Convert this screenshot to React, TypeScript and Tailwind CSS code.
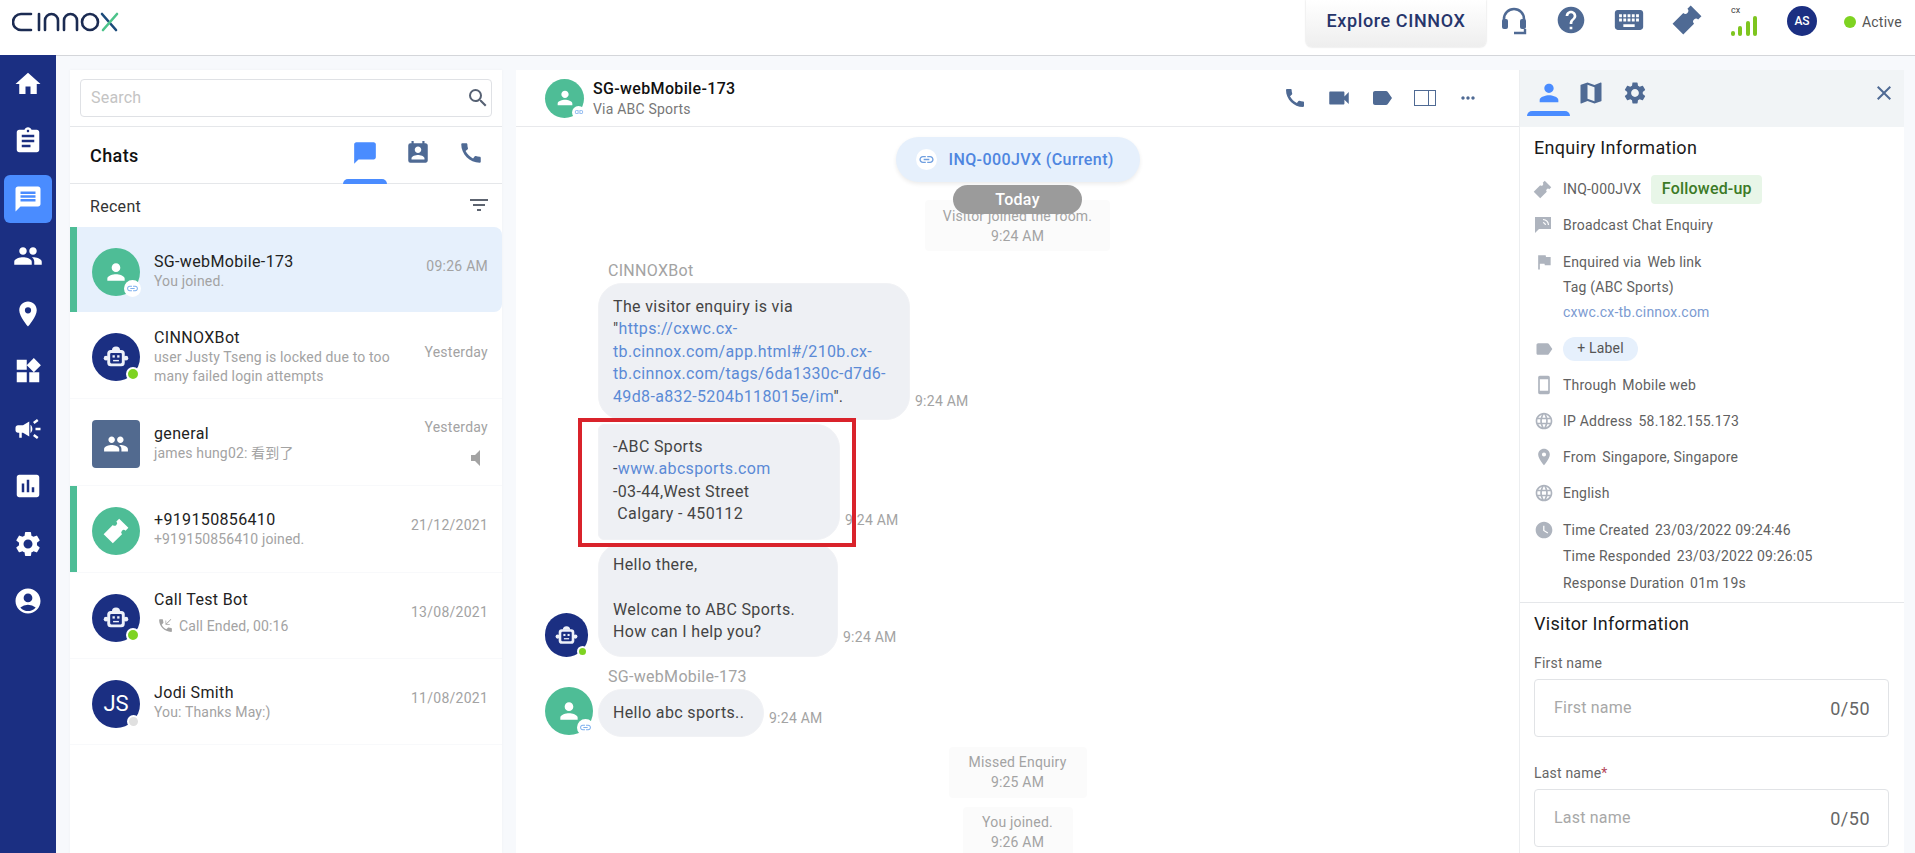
import type { ReactNode } from "react";
import {
  MdHome,
  MdAssignment,
  MdMessage,
  MdChatBubble,
  MdPeople,
  MdPlace,
  MdWidgets,
  MdCampaign,
  MdAssessment,
  MdSettings,
  MdAccountCircle,
  MdSearch,
  MdPermContactCalendar,
  MdCall,
  MdFilterList,
  MdPerson,
  MdLink,
  MdVolumeMute,
  MdPhoneCallback,
  MdVideocam,
  MdLabel,
  MdMoreHoriz,
  MdMap,
  MdClose,
  MdFlag,
  MdSmartphone,
  MdLanguage,
  MdWatchLater,
  MdHelp,
  MdKeyboard,
} from "react-icons/md";

const navItems = [
  MdHome,
  MdAssignment,
  MdMessage,
  MdPeople,
  MdPlace,
  MdWidgets,
  MdCampaign,
  MdAssessment,
  MdSettings,
  MdAccountCircle,
];

function Logo() {
  return (
    <svg width="108" height="20" viewBox="0 0 108 20" fill="none" strokeWidth="2.6" strokeLinecap="round">
      <g stroke="#1b2b52">
        <path d="M19 2H9a8 8 0 0 0 0 16h10" />
        <path d="M27 2v16" />
        <path d="M33 18V8.5a6.5 6.5 0 0 1 13 0V18" />
        <path d="M52 18V8.5a6.5 6.5 0 0 1 13 0V18" />
        <circle cx="78" cy="10" r="8" />
      </g>
      <path d="M90 2l14 16" stroke="#1b4a7a" />
      <path d="M105 2L91 18" stroke="#4cc38a" />
    </svg>
  );
}

function Headset() {
  return (
    <svg width="28" height="30" viewBox="0 0 28 30" fill="none">
      <path d="M4 20v-7a10 10 0 0 1 20 0v7" stroke="#4f6a94" strokeWidth="2.6" />
      <rect x="2" y="13" width="6" height="10" rx="2" fill="#4f6a94" />
      <rect x="20" y="13" width="6" height="10" rx="2" fill="#4f6a94" />
      <path d="M14 27h11v-4" stroke="#4f6a94" strokeWidth="2.4" />
    </svg>
  );
}

function Ticket({ size, className }: { size: number; className: string }) {
  return (
    <svg width={size} height={size} viewBox="0 0 24 24" className={`overflow-visible ${className}`} fill="currentColor">
      <g transform="rotate(-45 12 12)">
        <path d="M1 5.5h13a2.5 2.5 0 0 0 5 0h4v13h-4a2.5 2.5 0 0 0-5 0H1z" />
      </g>
    </svg>
  );
}

function Robot({ size }: { size: number }) {
  return (
    <svg width={size} height={size} viewBox="0 0 24 24">
      <path d="M8.5 6.5a3.5 3.5 0 0 1 7 0z" fill="#eef1f9" />
      <circle cx="3.5" cy="13" r="2" fill="#eef1f9" />
      <circle cx="20.5" cy="13" r="2" fill="#eef1f9" />
      <rect x="4.5" y="6" width="15" height="14" rx="3" fill="#eef1f9" />
      <rect x="7" y="8.5" width="10" height="9" rx="1" fill="#1b2f82" />
      <rect x="9" y="10.5" width="2" height="2" fill="#eef1f9" />
      <rect x="13" y="10.5" width="2" height="2" fill="#eef1f9" />
      <rect x="9.5" y="14.5" width="5" height="1.2" fill="#eef1f9" />
    </svg>
  );
}

function Signal() {
  return (
    <div className="flex h-[20px] w-[26px] items-end justify-between">
      <span className="h-[5px] w-[4px] rounded-full bg-[#7ec51f]" />
      <span className="h-[10px] w-[4px] rounded-full bg-[#7ec51f]" />
      <span className="h-[15px] w-[4px] rounded-full bg-[#7ec51f]" />
      <span className="h-[20px] w-[4px] rounded-full bg-[#7ec51f]" />
    </div>
  );
}

function TopBar() {
  return (
    <header className="flex h-[56px] shrink-0 items-start border-b border-[#d4d6da] bg-white">
      <div className="pl-[12px] pt-[12px]">
        <Logo />
      </div>
      <div className="ml-auto flex items-start">
        <div className="flex h-[47px] w-[180px] items-center justify-center rounded-b-md bg-gradient-to-b from-white to-[#eeeeee] pb-[6px] text-[18px] font-medium tracking-[0.6px] text-[#26356b] shadow-[0_0_2px_rgba(0,0,0,0.2)]">
          Explore CINNOX
        </div>
        <div className="flex w-[55px] justify-center pt-[6px]">
          <Headset />
        </div>
        <div className="flex w-[59px] justify-center pt-[4px]">
          <MdHelp size={32} className="text-[#4f6a94]" />
        </div>
        <div className="flex w-[58px] justify-center pt-[3px]">
          <MdKeyboard size={34} className="text-[#4f6a94]" />
        </div>
        <div className="flex w-[57px] justify-center pt-[6px]">
          <Ticket size={28} className="text-[#4f6a94]" />
        </div>
        <div className="ml-[16px] flex w-[26px] flex-col pt-[5px]">
          <span className="h-[11px] text-[9px] leading-[11px] text-[#444]">cx</span>
          <Signal />
        </div>
        <div className="ml-[30px] mt-[6px] flex h-[30px] w-[30px] items-center justify-center rounded-full bg-[#1b2f82] text-[12px] font-medium text-white">
          AS
        </div>
        <div className="ml-[27px] flex items-center pt-[15px] text-[14px] leading-[14px] tracking-[0.2px] text-[#555]">
          <span className="mr-[6px] h-[12px] w-[12px] rounded-full bg-[#7ed321]" />
          <span className="w-[53px]">Active</span>
        </div>
      </div>
    </header>
  );
}

function SideNav() {
  return (
    <nav className="relative -mt-[1px] w-[56px] shrink-0 bg-[#1b2f82]">
      {navItems.map((Icon, i) => (
        <div key={i} className="flex h-[57.5px] items-center justify-center">
          <div className={`flex h-[48px] w-[48px] items-center justify-center rounded-md ${i === 2 ? "bg-[#4a8cff]" : ""}`}>
            <Icon size={30} className="text-white" />
          </div>
        </div>
      ))}
    </nav>
  );
}

function LinkBadge({ small }: { small?: boolean }) {
  return (
    <span
      className={`absolute flex items-center justify-center rounded-full bg-white ${
        small ? "-bottom-[1px] -right-[1px] h-[13px] w-[13px]" : "-bottom-[1px] -right-[1px] h-[17px] w-[17px]"
      }`}
    >
      <MdLink size={small ? 10 : 13} className="text-[#7fb0ee]" />
    </span>
  );
}

function VisitorAvatar({ size = "lg" }: { size?: "lg" | "md" }) {
  return (
    <div
      className={`relative flex shrink-0 items-center justify-center rounded-full bg-[#4ebd96] ${
        size === "lg" ? "h-[48px] w-[48px]" : "h-[39px] w-[39px]"
      }`}
    >
      <MdPerson size={size === "lg" ? 26 : 22} className="text-white" />
      <LinkBadge small={size === "md"} />
    </div>
  );
}

function BotAvatar({ small }: { small?: boolean }) {
  return (
    <div
      className={`relative flex shrink-0 items-center justify-center rounded-full bg-[#1b2f82] ${
        small ? "h-[44px] w-[43px]" : "h-[48px] w-[48px]"
      }`}
    >
      <Robot size={small ? 25 : 28} />
      <span
        className={`absolute rounded-full border-2 border-white bg-[#7ed321] ${
          small ? "bottom-[0px] right-[0px] h-[11px] w-[11px]" : "bottom-[0px] right-[0px] h-[14px] w-[14px]"
        }`}
      />
    </div>
  );
}

function ChatRow({
  avatar,
  name,
  sub,
  time,
  timeTop,
  h,
  active,
  bar,
  align,
  extra,
}: {
  avatar: ReactNode;
  name: string;
  sub: ReactNode;
  time: string;
  timeTop: string;
  h: string;
  active?: boolean;
  bar?: boolean;
  align: string;
  extra?: ReactNode;
}) {
  return (
    <div
      className={`relative flex ${h} items-center pl-[22px] pr-[15px] pt-[4px] ${
        active ? "rounded-r-lg bg-[#e6f0fc]" : "border-b border-[#f8f9fb]"
      }`}
    >
      {bar && <span className="absolute bottom-0 left-0 top-0 w-[7px] bg-[#4ebd96]" />}
      {avatar}
      <div className={`ml-[14px] min-w-0 flex-1 ${align}`}>
        <div className="text-[16px] leading-[20px] tracking-[0.35px] text-[#222]">{name}</div>
        {sub}
      </div>
      <div className={`absolute right-[14px] ${timeTop} text-right text-[14px] leading-[18px] tracking-[0.25px] text-[#a3a3a3]`}>{time}</div>
      {extra}
    </div>
  );
}

function ChatList() {
  const subClass = "text-[14px] leading-[19.5px] tracking-[0.15px] text-[#a3a3a3]";
  return (
    <section className="flex w-[432px] shrink-0 flex-col bg-white shadow-[0_0_3px_rgba(0,0,0,0.04)]">
      <div className="h-[57px] border-b border-[#e5e7ea] px-[10px] pt-[9px]">
        <div className="flex h-[38px] items-center justify-between rounded border border-[#dfe1e5] pl-[10px] pr-[1px]">
          <span className="text-[16px] tracking-[0.2px] text-[#c4c4c4]">Search</span>
          <MdSearch size={24} className="text-[#566173]" />
        </div>
      </div>
      <div className="flex h-[57px] items-start border-b border-[#e5e7ea] pl-[20px]">
        <span className="pt-[18px] text-[18px] font-medium leading-[22px] tracking-[0.4px] text-[#111]">Chats</span>
        <div className="ml-auto flex">
          <div className="relative flex h-[57px] w-[44px] justify-center pt-[13px]">
            <MdChatBubble size={26} className="text-[#4a8cff]" />
            <span className="absolute bottom-0 left-0 h-[5px] w-[44px] rounded-t-md bg-[#4a8cff]" />
          </div>
          <div className="ml-[9px] flex w-[44px] justify-center pt-[13px]">
            <MdPermContactCalendar size={26} className="text-[#4f6a94]" />
          </div>
          <div className="ml-[9px] mr-[9px] flex w-[44px] justify-center pt-[13px]">
            <MdCall size={26} className="text-[#4f6a94]" />
          </div>
        </div>
      </div>
      <div className="flex h-[43px] items-center justify-between pl-[20px] pr-[11px]">
        <span className="pt-[3px] text-[16px] tracking-[0.3px] text-[#333]">Recent</span>
        <MdFilterList size={24} className="-translate-y-[1px] text-[#5d6470]" />
      </div>
      <ChatRow
        h="h-[85px]"
        active
        bar
        align=""
        avatar={<VisitorAvatar />}
        name="SG-webMobile-173"
        sub={<div className={subClass}>You joined.</div>}
        time="09:26 AM"
        timeTop="top-[30px]"
      />
      <ChatRow
        h="h-[87px]"
        align=""
        avatar={<BotAvatar />}
        name="CINNOXBot"
        sub={
          <div className={`${subClass} w-[250px]`}>
            user Justy Tseng is locked due to too many failed login attempts
          </div>
        }
        time="Yesterday"
        timeTop="top-[31px]"
      />
      <ChatRow
        h="h-[87px]"
        align=""
        avatar={
          <div className="flex h-[48px] w-[48px] shrink-0 items-center justify-center rounded bg-[#526a8f]">
            <MdPeople size={26} className="text-white" />
          </div>
        }
        name="general"
        sub={<div className={subClass}>james hung02: 看到了</div>}
        time="Yesterday"
        timeTop="top-[19px]"
        extra={<MdVolumeMute size={24} className="absolute right-[14px] top-[47px] text-[#a3a3a3]" />}
      />
      <ChatRow
        h="h-[87px]"
        bar
        align="-translate-y-[1px]"
        avatar={
          <div className="flex h-[48px] w-[48px] shrink-0 items-center justify-center rounded-full bg-[#4ebd96]">
            <Ticket size={24} className="text-white" />
          </div>
        }
        name="+919150856410"
        sub={<div className={subClass}>+919150856410 joined.</div>}
        time="21/12/2021"
        timeTop="top-[30px]"
      />
      <ChatRow
        h="h-[86px]"
        align="-translate-y-[5px]"
        avatar={<BotAvatar />}
        name="Call Test Bot"
        sub={
          <div className="mt-[6px] flex items-center text-[14px] leading-[20px] tracking-[0.15px] text-[#a3a3a3]">
            <MdPhoneCallback size={17} className="ml-[3px] mr-[5px]" />
            Call Ended, 00:16
          </div>
        }
        time="13/08/2021"
        timeTop="top-[30px]"
      />
      <ChatRow
        h="h-[86px]"
        align="-translate-y-[1px]"
        avatar={
          <div className="relative flex h-[48px] w-[48px] shrink-0 items-center justify-center rounded-full bg-[#1b2f82] text-[22px] text-white">
            JS
            <span className="absolute bottom-0 right-0 h-[13px] w-[13px] rounded-full border-2 border-white bg-[#e0e0e0]" />
          </div>
        }
        name="Jodi Smith"
        sub={<div className={subClass}>You: Thanks May:)</div>}
        time="11/08/2021"
        timeTop="top-[30px]"
      />
    </section>
  );
}

function Bubble({
  time,
  children,
  className,
  timeClass,
}: {
  time: string;
  children: ReactNode;
  className: string;
  timeClass: string;
}) {
  return (
    <div className="flex items-end">
      <div className={`border border-[#f1f2f5] bg-[#eef0f4] text-[16px] leading-[22.4px] tracking-[0.35px] text-[#444] ${className}`}>{children}</div>
      <span className={`ml-[5px] whitespace-nowrap text-[14px] leading-[18px] tracking-[0.25px] text-[#a3a3a3] ${timeClass}`}>{time}</span>
    </div>
  );
}

function Notice({ lines, className }: { lines: string[]; className: string }) {
  return (
    <div className={`shrink-0 self-center rounded bg-[#fbfbfb] text-center text-[14px] leading-[19.5px] tracking-[0.2px] text-[#a3a3a3] ${className}`}>
      {lines.map((l) => (
        <div key={l}>{l}</div>
      ))}
    </div>
  );
}

function Conversation() {
  const link = "text-[#5b8ad6]";
  return (
    <section className="flex min-w-0 flex-1 flex-col bg-white">
      <div className="flex h-[57px] shrink-0 items-center border-b border-[#e8e9ec] pl-[29px]">
        <VisitorAvatar size="md" />
        <div className="ml-[9px]">
          <div className="text-[16px] font-medium leading-[21px] tracking-[0.35px] text-[#111]">SG-webMobile-173</div>
          <div className="text-[14px] leading-[20px] tracking-[0.2px] text-[#777]">Via ABC Sports</div>
        </div>
        <div className="ml-auto flex items-center pr-[30px] text-[#4f6a94]">
          <div className="flex w-[44px] justify-center">
            <MdCall size={24} />
          </div>
          <div className="flex w-[43px] justify-center">
            <MdVideocam size={26} />
          </div>
          <div className="flex w-[43px] justify-center">
            <MdLabel size={24} />
          </div>
          <div className="flex w-[43px] justify-center">
            <div className="flex h-[16px] w-[22px] border-[1.5px] border-[#4f6a94]">
              <span className="ml-auto w-[7px] border-l-[1.5px] border-[#4f6a94]" />
            </div>
          </div>
          <div className="flex w-[43px] justify-center">
            <MdMoreHoriz size={20} />
          </div>
        </div>
      </div>
      <div className="relative flex flex-1 flex-col overflow-hidden">
        <div className="mt-[10px] flex h-[45px] w-[244px] shrink-0 items-center self-center rounded-full bg-[#e6f0fc] pl-[20px] text-[16px] font-medium tracking-[0.4px] text-[#4f86e0] shadow-[0_2px_4px_rgba(0,0,0,0.08)]">
          <span className="mr-[12px] flex h-[21px] w-[21px] items-center justify-center rounded-full bg-white">
            <MdLink size={17} className="text-[#6f9fe0]" />
          </span>
          INQ-000JVX (Current)
        </div>
        <Notice lines={["Visitor joined the room.", "9:24 AM"]} className="mt-[18px] w-[185px] pb-[5px] pt-[7px]" />
        <div className="absolute left-[437px] top-[58px] flex h-[29px] w-[129px] items-center justify-center rounded-full bg-[#9b9b9b] text-[16px] font-medium tracking-[0.3px] text-white">
          Today
        </div>
        <div className="ml-[92px] mt-[9px] shrink-0 text-[16px] leading-[22px] tracking-[0.3px] text-[#a3a3a3]">CINNOXBot</div>
        <div className="ml-[82px] mt-[1px] flex shrink-0 flex-col">
          <Bubble
            time="9:24 AM"
            className="h-[137px] w-[312px] rounded-[24px] px-[14px] pt-[12px]"
            timeClass="pb-[10px]"
          >
            The visitor enquiry is via
            <br />"<span className={link}>https://cxwc.cx-</span>
            <br />
            <span className={link}>tb.cinnox.com/app.html#/210b.cx-</span>
            <br />
            <span className={link}>tb.cinnox.com/tags/6da1330c-d7d6-</span>
            <br />
            <span className={link}>49d8-a832-5204b118015e/im</span>".
          </Bubble>
          <div className="mt-[4px]">
            <Bubble
              time="9:24 AM"
              className="h-[116px] w-[242px] rounded-r-[24px] rounded-l-md px-[14px] pt-[11px]"
              timeClass="pb-[11px]"
            >
              -ABC Sports
              <br />-<span className={link}>www.abcsports.com</span>
              <br />
              -03-44,West Street
              <br />
              <span className="whitespace-pre"> Calgary - 450112</span>
            </Bubble>
          </div>
          <div className="relative mt-[3px]">
            <div className="absolute -left-[53px] bottom-0">
              <BotAvatar small />
            </div>
            <Bubble
              time="9:24 AM"
              className="h-[114px] w-[240px] rounded-[24px] px-[14px] pt-[10px]"
              timeClass="pb-[11px]"
            >
              Hello there,
              <br />
              <br />
              Welcome to ABC Sports.
              <br />
              How can I help you?
            </Bubble>
          </div>
        </div>
        <div className="ml-[92px] mt-[9px] shrink-0 text-[16px] leading-[22px] tracking-[0.3px] text-[#a3a3a3]">SG-webMobile-173</div>
        <div className="ml-[29px] mt-[1px] flex shrink-0 items-start">
          <div className="-mt-[2px] mr-[5px]">
            <VisitorAvatar />
          </div>
          <Bubble time="9:24 AM" className="h-[48px] w-[166px] rounded-[24px] px-[14px] pt-[12px]" timeClass="pb-[10px]">
            Hello abc sports..
          </Bubble>
        </div>
        <Notice lines={["Missed Enquiry", "9:25 AM"]} className="mt-[10px] w-[138px] pb-[6px] pt-[6px]" />
        <Notice lines={["You joined.", "9:26 AM"]} className="mt-[9px] w-[110px] pb-[6px] pt-[6px]" />
        <div className="absolute left-[62px] top-[291px] h-[129px] w-[278px] border-[4px] border-[#d9232b]" />
      </div>
    </section>
  );
}

function BroadcastIcon() {
  return (
    <svg width="18" height="18" viewBox="0 0 18 18" fill="#aeb4be">
      <path d="M1 1h16v12H5l-4 4z" />
      <path d="M9 3.5a6 6 0 0 1 5.5 5.5M9 6.5a3 3 0 0 1 2.5 2.5" stroke="#fff" strokeWidth="1.2" fill="none" />
    </svg>
  );
}

function InfoRow({ icon, children, h = "h-[36px]" }: { icon?: ReactNode; children: ReactNode; h?: string }) {
  return (
    <div className={`flex ${h} items-center`}>
      <span className="flex w-[29px] shrink-0 justify-start">{icon}</span>
      <div className="flex items-center gap-[6px] text-[14px] tracking-[0.2px] text-[#616161]">{children}</div>
    </div>
  );
}

function Field({ label, placeholder, required }: { label: string; placeholder: string; required?: boolean }) {
  return (
    <div>
      <div className="text-[14px] leading-[20px] tracking-[0.2px] text-[#666]">
        {label}
        {required && <span className="text-[#b5475a]">*</span>}
      </div>
      <div className="mt-[6px] flex h-[58px] items-center justify-between rounded border border-[#e1e3e6] pl-[19px] pr-[18px]">
        <span className="text-[16px] tracking-[0.2px] text-[#a8a8a8]">{placeholder}</span>
        <span className="text-[18px] tracking-[0.5px] text-[#666]">0/50</span>
      </div>
    </div>
  );
}

function DetailsPanel() {
  const ic = "text-[#aeb4be]";
  return (
    <aside className="w-[385px] shrink-0 overflow-hidden border-l border-[#eceef0] bg-white">
      <div className="relative flex h-[57px] items-start bg-[#f1f4f6] text-[#4f6a94]">
        <div className="relative ml-[7px] flex h-[57px] w-[43px] justify-center pt-[9px]">
          <MdPerson size={28} className="text-[#4a8cff]" />
          <span className="absolute bottom-[11px] left-0 h-[5px] w-[43px] rounded-t-md bg-[#4a8cff]" />
        </div>
        <MdMap size={28} className="ml-[7px] mt-[9px]" />
        <MdSettings size={26} className="ml-[17px] mt-[10px]" />
        <MdClose size={24} className="ml-auto mr-[8px] mt-[11px]" />
      </div>
      <div className="px-[14px] pt-[9px]">
        <div className="text-[18px] leading-[24px] tracking-[0.3px] text-[#1a1a1a]">Enquiry Information</div>
        <div className="mt-[11px]">
          <InfoRow icon={<Ticket size={17} className={ic} />}>
            <span>INQ-000JVX</span>
            <span className="ml-[4px] flex h-[29px] w-[111px] items-center justify-center rounded bg-[#e8f6e8] text-[16px] font-medium text-[#3c7a26]">
              Followed-up
            </span>
          </InfoRow>
          <InfoRow icon={<BroadcastIcon />}>Broadcast Chat Enquiry</InfoRow>
          <div className="pt-[6px]">
            <InfoRow h="h-[26px]" icon={<MdFlag size={20} className={ic} />}>
              <span>Enquired via</span>
              <span>Web link</span>
            </InfoRow>
            <InfoRow h="h-[25px]">Tag (ABC Sports)</InfoRow>
            <InfoRow h="h-[24px]">
              <span className="text-[#7c9bd1]">cxwc.cx-tb.cinnox.com</span>
            </InfoRow>
          </div>
          <div className="mt-[6px]">
            <InfoRow h="h-[37px]" icon={<MdLabel size={20} className={ic} />}>
              <span className="flex h-[24px] w-[75px] items-center justify-center rounded-full bg-[#e6f0fc] text-[#555]">+ Label</span>
            </InfoRow>
          </div>
          <InfoRow icon={<MdSmartphone size={20} className={ic} />}>
            <span>Through</span>
            <span>Mobile web</span>
          </InfoRow>
          <InfoRow icon={<MdLanguage size={20} className={ic} />}>
            <span>IP Address</span>
            <span>58.182.155.173</span>
          </InfoRow>
          <InfoRow icon={<MdPlace size={20} className={ic} />}>
            <span>From</span>
            <span>Singapore, Singapore</span>
          </InfoRow>
          <InfoRow icon={<MdLanguage size={20} className={ic} />}>English</InfoRow>
          <div className="mt-[6px]">
            <InfoRow h="h-[26px]" icon={<MdWatchLater size={20} className={ic} />}>
              <span>Time Created</span>
              <span>23/03/2022 09:24:46</span>
            </InfoRow>
            <InfoRow h="h-[26px]">
              <span>Time Responded</span>
              <span>23/03/2022 09:26:05</span>
            </InfoRow>
            <InfoRow h="h-[28px]">
              <span>Response Duration</span>
              <span>01m 19s</span>
            </InfoRow>
          </div>
        </div>
      </div>
      <div className="mt-[5px] border-t border-[#e5e7ea] px-[14px] pt-[9px]">
        <div className="text-[18px] leading-[24px] tracking-[0.3px] text-[#1a1a1a]">Visitor Information</div>
        <div className="mt-[17px] w-[355px]">
          <Field label="First name" placeholder="First name" />
          <div className="mt-[26px]">
            <Field label="Last name" placeholder="Last name" required />
          </div>
        </div>
      </div>
    </aside>
  );
}

export default function App() {
  return (
    <div className="flex h-[853px] flex-col overflow-hidden bg-white font-['Roboto','Noto_Sans_CJK_SC',sans-serif]">
      <TopBar />
      <div className="flex min-h-0 flex-1">
        <SideNav />
        <main className="flex min-w-0 flex-1 gap-[14px] bg-[#f7f9fc] pl-[14px] pr-[11px] pt-[14px]">
          <ChatList />
          <div className="flex min-w-0 flex-1">
            <Conversation />
            <DetailsPanel />
          </div>
        </main>
      </div>
    </div>
  );
}
